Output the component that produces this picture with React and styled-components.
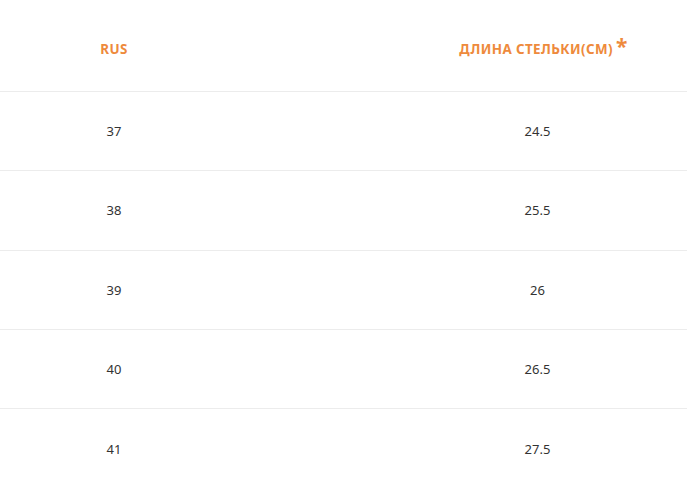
import React from 'react';
import styled, { createGlobalStyle } from 'styled-components';

const Global = createGlobalStyle`
  body {
    margin: 0;
    background: #fff;
    overflow: hidden;
    font-family: "Noto Sans", "Open Sans", sans-serif;
  }
`;

const Table = styled.div`
  width: 687px;
  display: grid;
  grid-template-columns: 228px 1fr;
`;

const Head = styled.div`
  height: 92px;
  display: flex;
  align-items: center;
  justify-content: center;
  padding-left: ${(p) => (p.$wide ? '160px' : '0')};
  padding-top: 6px;
  color: #ee8a3c;
  font-size: 13.4px;
  font-weight: 700;
  letter-spacing: 0.4px;
  text-transform: uppercase;
  border-bottom: 1px solid #ececec;
  box-sizing: border-box;
`;

const Label = styled.span`
  display: inline-flex;
  align-items: flex-start;
`;

const Star = styled.span`
  font-size: 21px;
  font-weight: 700;
  line-height: 1;
  margin: -4px -12px 0 3px;
`;

const Cell = styled.div`
  height: 79.3px;
  display: flex;
  align-items: center;
  justify-content: center;
  padding-left: ${(p) => (p.$wide ? '160px' : '0')};
  color: #333;
  font-size: 13px;
  border-bottom: ${(p) => (p.$last ? 'none' : '1px solid #ececec')};
  box-sizing: border-box;
`;

const rows = [
  ['37', '24.5'],
  ['38', '25.5'],
  ['39', '26'],
  ['40', '26.5'],
  ['41', '27.5'],
];

export default function App() {
  return (
    <>
      <Global />
      <Table>
        <Head><Label>RUS</Label></Head>
        <Head $wide>
          <Label>
            Длина стельки(см)
            <Star>*</Star>
          </Label>
        </Head>
        {rows.map(([rus, len], i) => (
          <React.Fragment key={rus}>
            <Cell $last={i === rows.length - 1}>{rus}</Cell>
            <Cell $wide $last={i === rows.length - 1}>{len}</Cell>
          </React.Fragment>
        ))}
      </Table>
    </>
  );
}
